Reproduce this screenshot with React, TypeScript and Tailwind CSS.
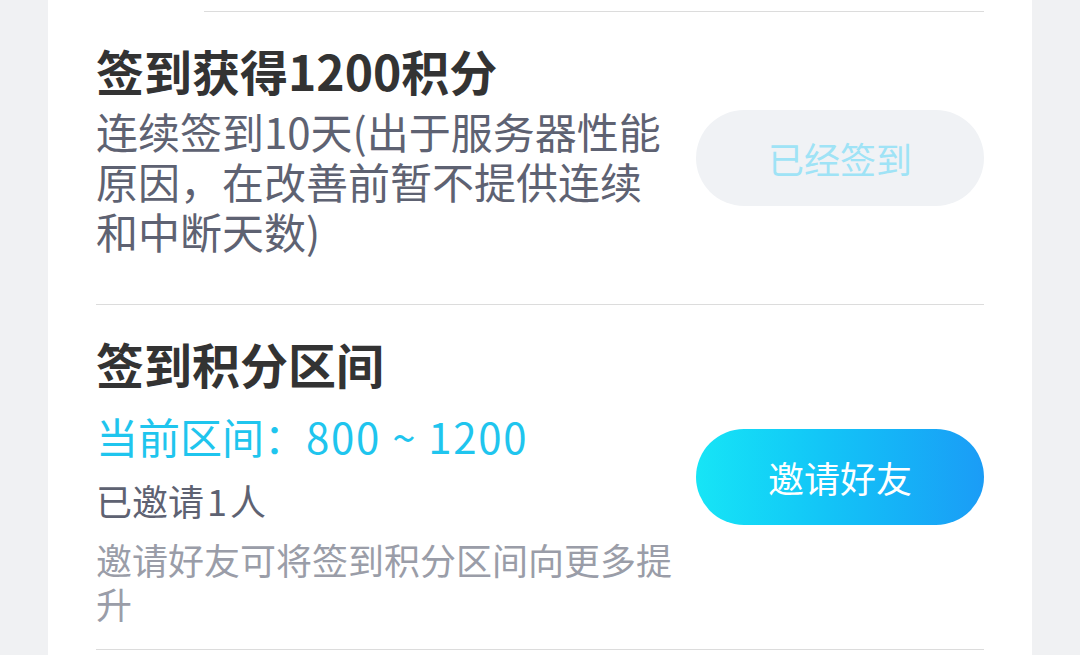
import React from "react";

const font = {
  fontFamily: '"Noto Sans CJK SC", "Noto Sans", sans-serif',
};

export default function App() {
  return (
    <div
      className="w-[1080px] h-[655px] overflow-hidden bg-[#f0f1f3] flex justify-center"
      style={font}
    >
      <div className="w-[984px] h-full bg-white px-[48px] flex flex-col">
        <div className="h-[11px]" />
        <div className="h-px bg-[#dcdcdc] ml-[108px]" />

        {/* Section 1 */}
        <div className="flex gap-[20px] border-b border-[#dcdcdc]">
          <div className="w-[580px] flex flex-col pt-[28px] pb-[48px]">
            <div className="text-[48px] leading-[60px] font-bold text-[#333333]">
              签到获得1200积分
            </div>
            <div className="mt-[6px] text-[42px] leading-[50px] text-[#5e6272]">
              连续签到10天(出于服务器性能原因，在改善前暂不提供连续和中断天数)
            </div>
          </div>
          <div className="flex-1 flex items-center">
            <button className="w-[288px] h-[96px] rounded-full bg-[#f0f2f5] text-[36px] text-[#9fe3f6] flex items-center justify-center">
              已经签到
            </button>
          </div>
        </div>

        {/* Section 2 */}
        <div className="flex gap-[20px] border-b border-[#dcdcdc]">
          <div className="w-[580px] flex flex-col pt-[28px] pb-[24px]">
            <div className="text-[48px] leading-[60px] font-bold text-[#333333]">
              签到积分区间
            </div>
            <div className="mt-[18px] text-[42px] leading-[50px] text-[#1fc5ee]">
              当前区间：<span className="tracking-[1.7px]">800 ~ 1200</span>
            </div>
            <div className="mt-[17px] text-[36px] leading-[44px] text-[#5e6272]">
              已邀请<span className="mx-[3px]">1</span>人
            </div>
            <div className="mt-[15px] text-[36px] leading-[44px] text-[#9a9da8]">
              邀请好友可将签到积分区间向更多提升
            </div>
          </div>
          <div className="flex-1 flex items-center">
            <button className="w-[288px] h-[96px] rounded-full bg-gradient-to-r from-[#17e5f6] to-[#1b9cf6] text-[36px] text-white flex items-center justify-center">
              邀请好友
            </button>
          </div>
        </div>
        <div className="flex-1" />
      </div>
    </div>
  );
}
